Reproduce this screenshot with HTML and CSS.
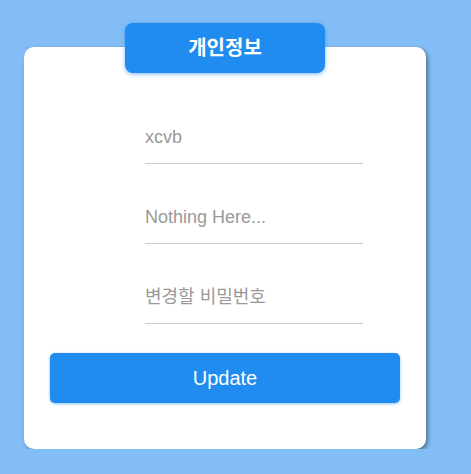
FILE: index.html
```html
<!DOCTYPE html>
<html lang="ko">
<head>
<meta charset="UTF-8">
<meta name="viewport" content="width=device-width, initial-scale=1.0">
<title>개인정보</title>
<link rel="stylesheet" href="styles.css">
</head>
<body>
<div class="card">
    <div class="badge">개인정보</div>
    <form class="form">
        <input type="text" class="field" placeholder="xcvb">
        <input type="text" class="field" placeholder="Nothing Here...">
        <input type="password" class="field" placeholder="변경할 비밀번호">
        <button type="button" class="update">Update</button>
    </form>
</div>
</body>
</html>
```

FILE: styles.css
```css
body {
    margin: 0;
    padding: 47px 0 0 24px;
    background-color: #83bdf5;
    font-family: 'Liberation Sans', Arial, 'Noto Sans CJK KR', sans-serif;
}
.card {
    position: relative;
    width: 402px;
    height: 402px;
    box-sizing: border-box;
    padding: 76px 26px 0 26px;
    background-color: #ffffff;
    border-radius: 10px;
    box-shadow: 2px 2px 4px rgba(0, 0, 0, 0.4);
}
.badge {
    position: absolute;
    top: -24px;
    left: 101px;
    width: 200px;
    height: 50px;
    line-height: 50px;
    text-align: center;
    background-color: #208cf0;
    color: #ffffff;
    font-size: 20px;
    font-weight: bold;
    border-radius: 8px;
    box-shadow: 0 1px 4px rgba(32, 140, 240, 0.6);
}
.form {
    display: flex;
    flex-direction: column;
}
.field {
    width: 218px;
    height: 41px;
    margin: 0 0 39px 95px;
    padding: 0 0 11px 0;
    box-sizing: border-box;
    border: none;
    border-bottom: 1px solid #cccccc;
    font-family: inherit;
    font-size: 18px;
    color: #999;
    outline: none;
}
.field::placeholder {
    color: #999;
}
.field:last-of-type {
    margin-bottom: 29px;
}
.update {
    width: 350px;
    height: 50px;
    border: none;
    border-radius: 5px;
    background-color: #208cf0;
    color: #ffffff;
    font-family: inherit;
    font-size: 20px;
    box-shadow: 0 1px 3px rgba(32, 140, 240, 0.5);
    cursor: pointer;
}
```
